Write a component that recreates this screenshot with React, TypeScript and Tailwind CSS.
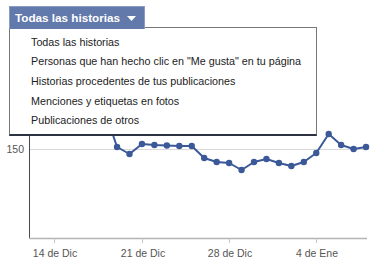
import React from "react";

const FONT = { fontFamily: '"Liberation Sans", Tahoma, Arial, sans-serif' };

const ITEMS = [
  "Todas las historias",
  "Personas que han hecho clic en \"Me gusta\" en tu página",
  "Historias procedentes de tus publicaciones",
  "Menciones y etiquetas en fotos",
  "Publicaciones de otros",
];

// y values for each day, x spacing ~12.45px
const YS = [110, 147, 154, 144, 145, 145.5, 146, 146, 158, 162, 163, 170, 162, 159, 163, 166, 162, 153, 134, 145, 149, 147];
const X0 = 104.6;
const DX = 12.45;

const TICKS = [
  { x: 54, label: "14 de Dic" },
  { x: 142, label: "21 de Dic" },
  { x: 229, label: "28 de Dic" },
  { x: 316, label: "4 de Ene" },
];

function Chart() {
  const pts = YS.map((y, i) => [X0 + i * DX, y]);
  return (
    <svg width={376} height={267} className="block">
      <line x1={30} y1={149.5} x2={367} y2={149.5} stroke="#d9d9d9" />
      <line x1={29.5} y1={30} x2={29.5} y2={239} stroke="#4a4a4a" />
      <line x1={29} y1={238.5} x2={367} y2={238.5} stroke="#b4b4b4" strokeWidth={1.5} />
      {TICKS.map((t) => (
        <g key={t.x}>
          <line x1={t.x + 0.5} y1={238} x2={t.x + 0.5} y2={243} stroke="#c4c4c4" />
          <text x={t.x + 1} y={257} textAnchor="middle" fontSize={10.5} fill="#555" style={FONT}>
            {t.label}
          </text>
        </g>
      ))}
      <text x={24} y={153} textAnchor="end" fontSize={10.5} fill="#555" style={FONT}>
        150
      </text>
      <polyline
        points={pts.map((p) => p.join(",")).join(" ")}
        fill="none"
        stroke="#3b5998"
        strokeWidth={2}
        strokeLinejoin="round"
      />
      {pts.map((p, i) => (
        <circle key={i} cx={p[0]} cy={p[1]} r={3.2} fill="#3b5998" />
      ))}
    </svg>
  );
}

export default function App() {
  return (
    <div className="relative w-[376px] h-[267px] overflow-hidden bg-white" style={FONT}>
      <Chart />

      <div className="absolute left-[9px] top-[6px]">
        <button className="relative z-10 flex h-[23px] w-[136px] items-center gap-[7px] border border-b-0 border-[#8a9cc2] bg-[#6179ab] pl-[5px] text-[11.7px] font-bold text-white">
          Todas las historias
          <svg width={9} height={5} viewBox="0 0 9 5">
            <path d="M0 0h9L4.5 5z" fill="#fff" />
          </svg>
        </button>
        <div className="-mt-[2px] w-[308px] border border-[#777] border-b-2 border-b-[#2c3443] bg-white pt-[4px] pb-[4px] pl-[21px]">
          {ITEMS.map((t) => (
            <div key={t} className="flex h-[19.6px] items-center text-[10.75px] text-[#222]">
              {t}
            </div>
          ))}
        </div>
      </div>
    </div>
  );
}
